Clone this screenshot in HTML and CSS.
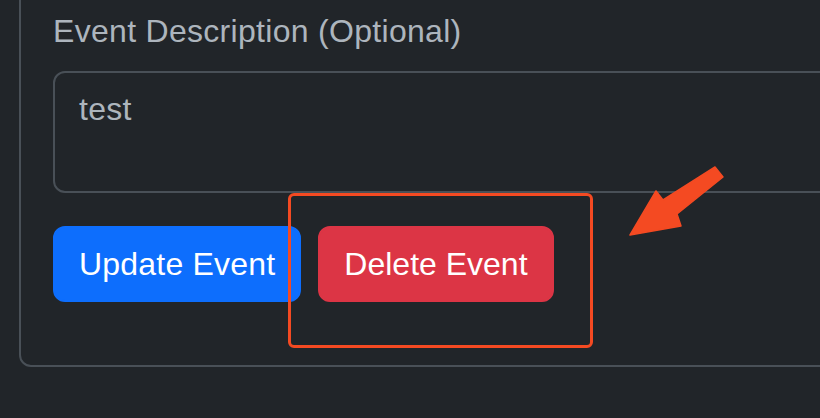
FILE: index.html
```html
<!DOCTYPE html>
<html lang="en">
<head>
<meta charset="utf-8">
<title>Edit Event</title>
<link rel="stylesheet" href="styles.css">
</head>
<body>
<div class="card">
  <div class="card-body">
    <div class="field">
      <label class="form-label" for="desc">Event Description (Optional)</label>
      <textarea id="desc" class="form-control">test</textarea>
    </div>
    <div class="actions">
      <button class="btn btn-primary" type="button">Update Event</button>
      <button class="btn btn-danger" type="button">Delete Event</button>
    </div>
  </div>
</div>
<div class="highlight"></div>
<svg class="arrow" width="820" height="418" viewBox="0 0 820 418" aria-hidden="true">
  <polygon points="630,235 656,191 663,200 715,167 723,177 677,214 681,226" fill="#f44a22" stroke="#f44a22" stroke-width="1.5" stroke-linejoin="round"/>
</svg>
</body>
</html>
```
FILE: styles.css
```css
* { box-sizing: border-box; }
html, body {
  margin: 0;
  height: 100%;
  background: #212529;
  overflow: hidden;
}
body {
  position: relative;
  font-family: "Liberation Sans", Arial, Helvetica, sans-serif;
  color: #adb5bd;
}
.card {
  margin: -27px 0 0 19px;
  width: calc(100% + 60px);
  border: 2px solid #495057;
  border-radius: 12px;
}
.card-body {
  padding: 32px;
}
.field {
  display: flex;
  flex-direction: column;
  margin-bottom: 33px;
}
.form-label {
  font-size: 32px;
  line-height: 48px;
  letter-spacing: 0.3px;
  margin-bottom: 16px;
  color: #adb5bd;
}
.form-control {
  display: block;
  width: 100%;
  height: 122px;
  padding: 12px 24px;
  font-family: inherit;
  font-size: 32px;
  line-height: 48px;
  letter-spacing: 0.3px;
  color: #adb5bd;
  background: #212529;
  border: 2px solid #495057;
  border-radius: 12px;
  resize: none;
  outline: none;
}
.actions {
  display: flex;
  gap: 17px;
  margin-bottom: 31px;
}
.btn {
  font-family: inherit;
  font-size: 32px;
  line-height: 48px;
  letter-spacing: 0.2px;
  padding: 12px 24px;
  color: #fff;
  border: 2px solid transparent;
  border-radius: 12px;
  cursor: pointer;
}
.btn-primary { background: #0d6efd; border-color: #0d6efd; }
.btn-danger { background: #dc3545; border-color: #dc3545; letter-spacing: 0; }
.highlight {
  position: absolute;
  left: 288px;
  top: 193px;
  width: 305px;
  height: 155px;
  border: 3px solid #f44a22;
  border-radius: 6px;
}
.arrow {
  position: absolute;
  left: 0;
  top: 0;
}
```
